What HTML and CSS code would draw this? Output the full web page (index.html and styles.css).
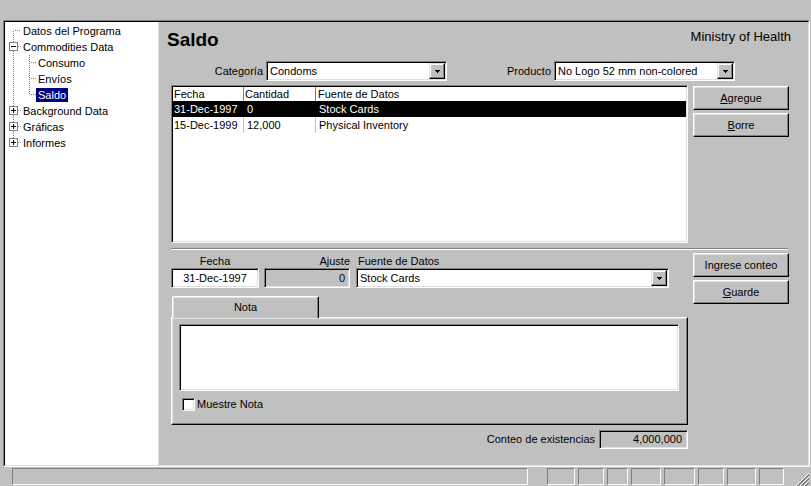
FILE: index.html
```html
<!DOCTYPE html>
<html lang="es">
<head>
<meta charset="utf-8">
<title>Saldo</title>
<link rel="stylesheet" href="styles.css">
</head>
<body>
<div class="app">
  <div class="topbar"></div>
  <div class="frame">
    <div class="frame-in">
      <div class="tree">
        <div class="node">
          <svg class="gut" width="16" height="16"><path class="dot" d="M8.5 8V16M10 7.5H16"/></svg>
          <span class="lbl">Datos del Programa</span>
        </div>
        <div class="node">
          <svg class="gut" width="16" height="16"><path class="dot" d="M8.5 0V16M13 7.5H16"/><rect class="box" x="4.5" y="3.5" width="8" height="8"/><path class="sign" d="M6 7.5H11"/></svg>
          <span class="lbl">Commodities Data</span>
        </div>
        <div class="node">
          <svg class="gut" width="31" height="16"><path class="dot" d="M8.5 0V16M24.5 0V16M26 7.5H31"/></svg>
          <span class="lbl">Consumo</span>
        </div>
        <div class="node">
          <svg class="gut" width="31" height="16"><path class="dot" d="M8.5 0V16M24.5 0V16M26 7.5H31"/></svg>
          <span class="lbl">Envíos</span>
        </div>
        <div class="node">
          <svg class="gut" width="31" height="16"><path class="dot" d="M8.5 0V16M24.5 0V8M26 7.5H31"/></svg>
          <span class="lbl sel">Saldo</span>
        </div>
        <div class="node">
          <svg class="gut" width="16" height="16"><path class="dot" d="M8.5 0V16M13 7.5H16"/><rect class="box" x="4.5" y="3.5" width="8" height="8"/><path class="sign" d="M6 7.5H11M8.5 5V10"/></svg>
          <span class="lbl">Background Data</span>
        </div>
        <div class="node">
          <svg class="gut" width="16" height="16"><path class="dot" d="M8.5 0V16M13 7.5H16"/><rect class="box" x="4.5" y="3.5" width="8" height="8"/><path class="sign" d="M6 7.5H11M8.5 5V10"/></svg>
          <span class="lbl">Gráficas</span>
        </div>
        <div class="node">
          <svg class="gut" width="16" height="16"><path class="dot" d="M8.5 0V8M13 7.5H16"/><rect class="box" x="4.5" y="3.5" width="8" height="8"/><path class="sign" d="M6 7.5H11M8.5 5V10"/></svg>
          <span class="lbl">Informes</span>
        </div>
      </div>

      <div class="panel">
        <div class="header">
          <h1 class="title">Saldo</h1>
          <div class="org">Ministry of Health</div>
        </div>

        <div class="filters">
          <span class="flabel f1">Categoría</span>
          <div class="combo sunken w181"><span class="ctext">Condoms</span><span class="dd"><svg width="5" height="3"><path d="M0 0h5v1h-1v1h-1v1h-1v-1h-1v-1h-1z"/></svg></span></div>
          <span class="flabel f2">Producto</span>
          <div class="combo sunken w181"><span class="ctext">No Logo 52 mm non-colored</span><span class="dd"><svg width="5" height="3"><path d="M0 0h5v1h-1v1h-1v1h-1v-1h-1v-1h-1z"/></svg></span></div>
        </div>

        <div class="main">
          <div class="list sunken">
            <div class="lv-head"><span>Fecha</span><span>Cantidad</span><span>Fuente de Datos</span></div>
            <div class="lv-row sel"><span>31-Dec-1997</span><span>0</span><span>Stock Cards</span></div>
            <div class="lv-row"><span>15-Dec-1999</span><span>12,000</span><span>Physical Inventory</span></div>
          </div>
          <div class="btncol">
            <div class="btn"><span><u>A</u>gregue</span></div>
            <div class="btn"><span><u>B</u>orre</span></div>
          </div>
        </div>

        <div class="sep"></div>

        <div class="lower">
          <div class="lcol">
            <div class="labels">
              <span class="lb-date">Fecha</span>
              <span class="lb-adj">Ajuste</span>
              <span class="lb-src">Fuente de Datos</span>
            </div>
            <div class="fields">
              <div class="field sunken fdate">31-Dec-1997</div>
              <div class="field sunken fadj ro">0</div>
              <div class="combo sunken fsrc"><span class="ctext">Stock Cards</span><span class="dd"><svg width="5" height="3"><path d="M0 0h5v1h-1v1h-1v1h-1v-1h-1v-1h-1z"/></svg></span></div>
            </div>
            <div class="tabs">
              <div class="tab">Nota</div>
              <div class="tabpanel">
                <div class="memo sunken"></div>
                <div class="chkrow">
                  <span class="chk"></span>
                  <span class="chklbl">Muestre Nota</span>
                </div>
              </div>
            </div>
            <div class="countrow">
              <span class="countlbl">Conteo de existencias</span>
              <div class="field sunken ro fcount">4,000,000</div>
            </div>
          </div>
          <div class="btncol rcol">
            <div class="btn"><span>Ingrese conteo</span></div>
            <div class="btn"><span><u>G</u>uarde</span></div>
          </div>
        </div>
      </div>
    </div>
  </div>

  <div class="statusbar">
    <div class="sp sp1"></div>
    <div class="sp sp2"></div>
    <div class="sp sp3"></div>
    <div class="sp sp4"></div>
    <div class="sp sp5"></div>
    <div class="sp sp6"></div>
    <div class="sp sp7"></div>
    <div class="sp sp8"></div>
    <div class="sp sp9"></div>
    <svg class="grip" width="14" height="14" shape-rendering="crispEdges">
      <path d="M14 1L1 14M14 5L5 14M14 9L9 14" stroke="#fff"/>
      <path d="M14 2L2 14M14 3L3 14M14 6L6 14M14 7L7 14M14 10L10 14M14 11L11 14" stroke="#808080"/>
    </svg>
  </div>
</div>
</body>
</html>
```

FILE: styles.css
```css
* { box-sizing: border-box; }
html, body { margin: 0; padding: 0; }
body {
  background: #c0c0c0;
  font-family: "Liberation Sans", Arial, sans-serif;
  font-size: 11px;
  line-height: 13px;
  color: #000;
  width: 811px;
  height: 486px;
  overflow: hidden;
}
.app { display: flex; flex-direction: column; width: 811px; height: 486px; }
.topbar { height: 20px; flex: none; }

.frame {
  flex: none;
  width: 807px;
  height: 447px;
  margin-left: 3px;
  border: 1px solid;
  border-color: #808080 #fff #fff #808080;
}
.frame-in {
  height: 100%;
  display: flex;
  border: 1px solid;
  border-color: #000 #dfdfdf #dfdfdf #000;
}

/* tree */
.tree {
  flex: none;
  width: 154px;
  background: #fff;
  border-right: 1px solid #dfdfdf;
  padding-top: 1px;
}
.node { display: flex; align-items: center; height: 16px; }
.gut { flex: none; display: block; }
.lbl { padding: 0 2px; line-height: 14px; white-space: nowrap; }
.lbl.sel { background: #000080; color: #fff; }
.dot { stroke: #808080; stroke-dasharray: 1 1; fill: none; }
.box { fill: #fff; stroke: #808080; }
.sign { stroke: #000; fill: none; }

/* panel */
.panel {
  flex: 1;
  display: flex;
  flex-direction: column;
  padding: 0 19px 0 12px;
}
.header {
  display: flex;
  justify-content: space-between;
  align-items: flex-start;
  height: 39px;
  margin: 0 -2px 0 -4px;
}
.title { font-size: 19px; font-weight: bold; line-height: 22px; margin: 7px 0 0; }
.org { font-size: 13px; line-height: 15px; margin-top: 7px; }

.sunken {
  border: 1px solid;
  border-color: #808080 #fff #fff #808080;
  box-shadow: inset 1px 1px #000, inset -1px -1px #dfdfdf;
  padding: 1px;
}

.filters { display: flex; align-items: center; height: 20px; }
.flabel { text-align: right; padding-right: 3px; white-space: nowrap; }
.f1 { width: 95px; }
.f2 { width: 107px; }
.combo {
  display: flex;
  align-items: center;
  height: 20px;
  background: #fff;
}
.w181 { width: 181px; }
.ctext { flex: 1; padding-left: 2px; white-space: nowrap; overflow: hidden; }
.dd {
  flex: none;
  width: 16px;
  height: 16px;
  display: flex;
  align-items: center;
  justify-content: center;
  background: #c0c0c0;
  border: 1px solid;
  border-color: #dfdfdf #000 #000 #dfdfdf;
  box-shadow: inset -1px -1px #808080, inset 1px 1px #fff;
}
.dd svg { display: block; }

.main { display: flex; gap: 5px; margin-top: 4px; }
.list { width: 517px; height: 158px; background: #fff; }
.lv-head, .lv-row { display: grid; grid-template-columns: 71px 72px 1fr; white-space: nowrap; }
.lv-head { height: 14px; line-height: 14px; }
.lv-head span { border-right: 1px solid #808080; padding-left: 1px; }
.lv-head span:nth-child(3) { padding-left: 2px; }
.lv-row { height: 16px; line-height: 16px; }
.lv-row span { border-right: 1px solid #c0c0c0; padding-left: 3px; }
.lv-row span:first-child { padding-left: 1px; }
.lv-head span:last-child, .lv-row span:last-child { border-right: 0; }
.lv-row.sel { background: #000; color: #fff; }
.lv-row.sel span { border-color: #000; }

.btncol { display: flex; flex-direction: column; gap: 3px; margin-top: 1px; }
.btn {
  width: 96px;
  height: 24px;
  display: flex;
  align-items: center;
  justify-content: center;
  background: #c0c0c0;
  border: 1px solid;
  border-color: #fff #000 #000 #fff;
  box-shadow: inset -1px -1px #808080, inset 1px 1px #dfdfdf;
}

.sep {
  height: 2px;
  margin: 5px 1px 0 0;
  border-top: 1px solid #808080;
  border-bottom: 1px solid #fff;
}

.lower { display: flex; gap: 5px; }
.lcol { width: 517px; display: flex; flex-direction: column; }
.rcol { margin-top: 3px; }

.labels { display: flex; height: 13px; margin-top: 5px; white-space: nowrap; }
.lb-date { width: 88px; text-align: center; }
.lb-adj { width: 86px; margin-left: 5px; text-align: right; }
.lb-src { margin-left: 8px; }

.fields { display: flex; height: 20px; }
.field {
  height: 20px;
  display: flex;
  align-items: center;
  background: #fff;
  white-space: nowrap;
}
.field.ro { background: #c0c0c0; justify-content: flex-end; }
.fdate { width: 88px; justify-content: center; }
.fadj { width: 86px; margin-left: 5px; padding-right: 4px; }
.fsrc { width: 313px; margin-left: 6px; }

.tabs { margin-top: 8px; display: flex; flex-direction: column; }
.tab {
  position: relative;
  z-index: 1;
  width: 147px;
  height: 22px;
  margin: 0 0 -1px 1px;
  display: flex;
  align-items: center;
  justify-content: center;
  background: #c0c0c0;
  border-top: 1px solid #fff;
  border-left: 1px solid #fff;
  border-right: 1px solid #000;
  border-radius: 2px 2px 0 0;
  box-shadow: inset -1px 0 #808080, inset 1px 1px #dfdfdf;
}
.tabpanel {
  width: 517px;
  height: 108px;
  border: 1px solid;
  border-color: #fff #000 #000 #fff;
  box-shadow: inset -1px -1px #808080, inset 1px 1px #dfdfdf;
  padding: 6px 7px;
}
.memo { width: 500px; height: 67px; background: #fff; }
.chkrow { display: flex; align-items: center; margin: 7px 0 0 3px; height: 13px; }
.chk {
  width: 13px;
  height: 13px;
  background: #fff;
  border: 1px solid;
  border-color: #808080 #fff #fff #808080;
  box-shadow: inset 1px 1px #000, inset -1px -1px #dfdfdf;
}
.chklbl { margin-left: 2px; }

.countrow { display: flex; justify-content: flex-end; align-items: center; gap: 4px; margin-top: 5px; }
.fcount { width: 89px; height: 19px; padding-right: 5px; }

/* status bar */
.statusbar { flex: none; display: flex; height: 19px; padding: 1px 0 0 12px; gap: 3px; }
.sp {
  height: 17px;
  border: 1px solid;
  border-color: #808080 #fff #fff #808080;
}
.sp1 { width: 516px; }
.sp2 { width: 28px; margin-left: 16px; }
.sp3 { width: 26px; }
.sp4 { width: 21px; }
.sp5 { width: 30px; }
.sp6 { width: 31px; }
.sp7 { width: 26px; }
.sp8 { width: 29px; }
.sp9 { width: 25px; }
.grip { margin: auto 2px 0 auto; display: block; }
```
